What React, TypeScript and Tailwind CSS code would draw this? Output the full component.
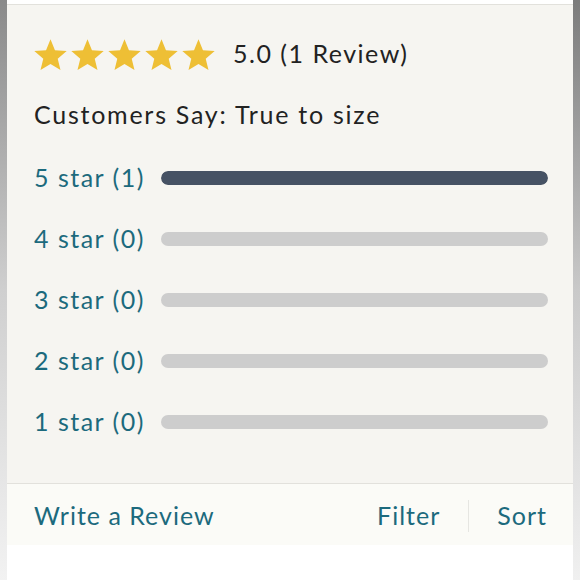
const rows = [
  { label: '5 star (1)', pct: 100 },
  { label: '4 star (0)', pct: 0 },
  { label: '3 star (0)', pct: 0 },
  { label: '2 star (0)', pct: 0 },
  { label: '1 star (0)', pct: 0 },
];

const Star = () => (
  <svg viewBox="0 0 24 24" className="w-[35px] h-[35px]">
    <path
      d="M12 1.6l3.05 7.45 8.05.6-6.15 5.2 1.9 7.85L12 18.5l-6.85 4.2 1.9-7.85L.9 9.65l8.05-.6z"
      fill="#eebf35"
    />
  </svg>
);

export default function App() {
  return (
    <div
      className="w-[580px] h-[580px] flex bg-white overflow-hidden"
      style={{ fontFamily: 'Lato, "Open Sans", sans-serif' }}
    >
      <div className="w-[7px] bg-gradient-to-b from-[#8a8a8a] via-[#cfcfcf] to-[#f2f2f2]" />

      <div className="flex-1 flex flex-col">
        <div className="h-[4px] bg-white" />
        <div className="bg-[#f6f5f1] border-t border-b border-[#e2e1dc] pl-[27px] pr-[25px] pt-[31px] pb-[46px]">
          <div className="flex items-center h-[36px]">
            <div className="flex gap-[2px] -ml-[1px]">
              <Star />
              <Star />
              <Star />
              <Star />
              <Star />
            </div>
            <span className="ml-[17px] text-[25px] tracking-[0.06em] text-[#222]">5.0 (1 Review)</span>
          </div>

          <p className="mt-[27px] h-[30px] leading-[30px] text-[25px] tracking-[0.07em] text-[#222]">
            Customers Say: True to size
          </p>

          <div className="mt-[34px] flex flex-col gap-[31px]">
            {rows.map((r) => (
              <div key={r.label} className="flex items-center h-[30px]">
                <span className="w-[127px] shrink-0 text-[25px] tracking-[0.06em] text-[#1c6a7d]">
                  {r.label}
                </span>
                <div className="flex-1 h-[14px] rounded-full bg-[#cdcdcd] overflow-hidden">
                  <div className="h-full rounded-full bg-[#465264]" style={{ width: `${r.pct}%` }} />
                </div>
              </div>
            ))}
          </div>
        </div>

        <div className="h-[61px] pt-[2px] bg-[#fbfbf7] flex items-center pl-[27px] pr-[26px] text-[25px] tracking-[0.04em] text-[#1c6a7d]">
          <span>Write a Review</span>
          <span className="ml-auto">Filter</span>
          <div className="mx-[28px] w-px h-[32px] bg-[#e6e6e2]" />
          <span>Sort</span>
        </div>

        <div className="flex-1 bg-white" />
      </div>

      <div className="w-[7px] bg-gradient-to-b from-[#7c7c7c] via-[#c9c9c9] to-[#f0f0f0]" />
    </div>
  );
}
